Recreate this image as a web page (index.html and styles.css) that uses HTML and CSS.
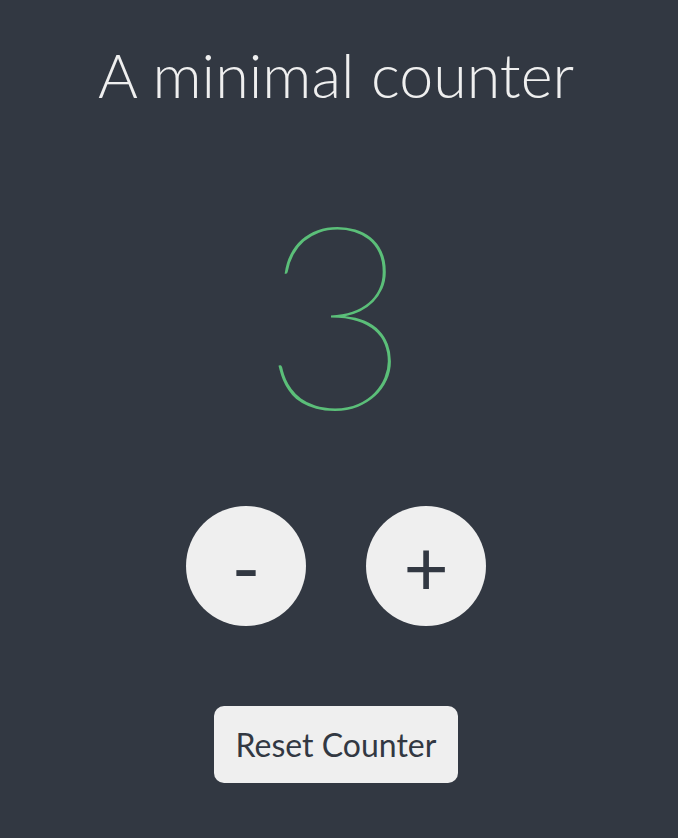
FILE: index.html
```html
<!DOCTYPE html>
<html>
<head>
<meta charset="utf-8">
<link rel="stylesheet" href="styles.css">
</head>
<body>
<main class="app">
  <h1 class="title">A minimal counter</h1>
  <div class="count">3</div>
  <div class="controls">
    <button class="round">-</button>
    <button class="round">+</button>
  </div>
  <button class="reset">Reset Counter</button>
</main>
</body>
</html>
```
FILE: styles.css
```css
html, body {
  margin: 0;
  padding: 0;
  background: #323842;
  height: 100%;
}
body {
  font-family: Lato, "Noto Sans", sans-serif;
  color: #efefef;
}
.app {
  display: flex;
  flex-direction: column;
  align-items: center;
  padding-right: 6px;
}
.title {
  margin: 35px 0 0;
  font-size: 61px;
  font-weight: 300;
  line-height: 80px;
}
.count {
  margin-top: 65px;
  font-size: 256px;
  font-weight: 100;
  line-height: 260px;
  color: #5bbf79;
}
.controls {
  margin-top: 66px;
  display: flex;
  gap: 60px;
}
.round {
  width: 120px;
  height: 120px;
  border-radius: 50%;
  border: none;
  background: #efefef;
  color: #323842;
  font-family: Lato, sans-serif;
  font-size: 78px;
  font-weight: 400;
  line-height: 1;
  padding: 0;
}
.reset {
  margin-top: 80px;
  width: 244px;
  height: 77px;
  border: none;
  border-radius: 10px;
  background: #efefef;
  color: #323842;
  font-family: Lato, sans-serif;
  font-size: 32px;
}
```
